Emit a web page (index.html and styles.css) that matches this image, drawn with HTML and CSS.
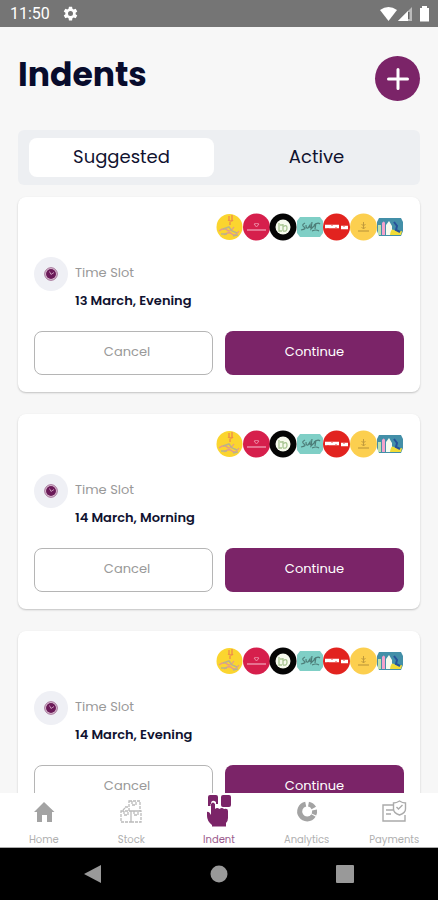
FILE: index.html
```html
<!DOCTYPE html>
<html lang="en">
<head>
<meta charset="utf-8">
<meta name="viewport" content="width=device-width, initial-scale=1">
<title>Indents</title>
<link rel="stylesheet" href="styles.css">
</head>
<body>
<svg class="defs" aria-hidden="true">
  <symbol id="brands" viewBox="0 0 188 28">
    <circle cx="13.500" cy="14" r="13" fill="#fbd52f"/>
    <path d="M13 3v5M16 2v6M12 7q3 2 5 0M14 9v3" stroke="#ee8c4c" stroke-width="1.300" fill="none"/>
    <path d="M3 18q5-4 8-1t7-3M8 22q5-4 8-1t7-3" stroke="#e59a8c" stroke-width="1.300" fill="none"/>
    <path d="M7 16l6-2 3 4 5 2M5 21h6M17 23l5-1" stroke="#b9b48c" stroke-width="1.500" fill="none"/>
    <circle cx="40.500" cy="14" r="13.500" fill="#d61f4c"/>
    <path d="M38 11l2.500 3 2.500-3q-2.500-1-5 0z" fill="none" stroke="#ec8ba4"/>
    <path d="M31 17h19" stroke="#ea86a0" stroke-width="1.600"/>
    <circle cx="67" cy="14" r="13.500" fill="#050505"/>
    <circle cx="67" cy="14" r="7.500" fill="#f7faee"/>
    <path d="M63 10v8h3M67 11v7M67 14q4-3 4 1t-4 3M64 12h3" fill="none" stroke="#a9c693" stroke-width="1.300"/>
    <path d="M84 4h20l3 4v12l-3 4H84l-3-4V8z" fill="#7fcfc6"/>
    <path d="M89 10q-4 2-1 4t-3 3M90 12q0 4 2 3l2-3v3M96 9l-1 7 4-4M100 10l-1 6M98 12q4-3 6-1M96 18q4-2 7 0" fill="none" stroke="#4d7d78" stroke-width="1.200"/>
    <circle cx="120.500" cy="14" r="13.500" fill="#e2231f"/>
    <path d="M109 13.500h14M125 14.500h7" stroke="#fff" stroke-width="3.400"/>
    <path d="M112 15v1M116 12v1M120 14v1M128 13v1" stroke="#e2231f" stroke-width=".8"/>
    <circle cx="147.500" cy="14" r="13.500" fill="#fccf4f"/>
    <path d="M147.500 9v7M145.500 11l2 2 2-2M145.500 14l2 2 2-2" fill="none" stroke="#c19b3d"/>
    <path d="M142 18h11" stroke="#c19b3d" stroke-width="1.200"/>
    <path d="M163 5h22l2 4v9l-2 5h-22l-2-5V9z" fill="#438fa8"/>
    <path d="M162 12h3v10h-3z" fill="#bfe0ae"/><path d="M166 10q2-3 3 0v12h-3z" fill="#f3a2cc"/>
    <path d="M170 12l3-4 3 5v9h-6z" fill="#f7fbee"/><path d="M174 22q1-7 4-5t8 1l-1 4z" fill="#f1dc37"/>
    <path d="M178 9l3 4-1 4 4 2" stroke="#26529a" stroke-width="2" fill="none"/>
  </symbol>
  <symbol id="clock" viewBox="0 0 14 14">
    <circle cx="7" cy="7" r="6.300" fill="#e4cfdd" stroke="#8b4a7b" stroke-width=".8"/>
    <circle cx="7" cy="7" r="5" fill="#6b1a58"/>
    <path d="M5.500 4.500l1.500 3 3-2" fill="none" stroke="#c391b5"/>
  </symbol>
</svg>

<header class="status">
  <span>11:50</span>
  <svg width="15" height="15" viewBox="0 0 24 24" aria-hidden="true"><path fill="#fff" fill-rule="evenodd" d="M9.500 1h5l.6 3.300 2 1.200 3.200-1.200 2.500 4.400-2.600 2.100v2.400l2.600 2.100-2.500 4.400-3.200-1.200-2 1.200-.6 3.300h-5l-.6-3.300-2-1.200-3.200 1.200-2.500-4.400 2.600-2.100v-2.400L1.200 8.700l2.500-4.400 3.200 1.200 2-1.200zM12 8a4 4 0 1 0 0 8 4 4 0 0 0 0-8z"/></svg>
  <svg class="signals" width="50" height="16" viewBox="0 0 50 16" aria-hidden="true">
    <path fill="#fff" d="M0 4q8.500-6 17 0L8.500 15z"/>
    <path fill="#bbb" d="M18 15L32 1v14z"/><path fill="#fff" d="M18 15L28 5v10z"/><path fill="#666" d="M28 6h1.500v7H28z"/>
    <path fill="#fff" d="M40 2h2V0h5v2h2v13.500h-9z"/>
  </svg>
</header>

<main class="screen">
  <div class="heading">
    <h1>Indents</h1>
    <button class="add" aria-label="Add indent"><svg width="24" height="24" viewBox="0 0 24 24"><path d="M12 2.500v19M2.500 12h19" stroke="#fff" stroke-width="3" stroke-linecap="round"/></svg></button>
  </div>
  <div class="tabs">
    <button class="tab selected">Suggested</button>
    <button class="tab">Active</button>
  </div>

  <section class="cards">
    <article class="card">
      <svg class="brands" aria-hidden="true"><use href="#brands"/></svg>
      <div class="slot">
        <span class="badge"><svg width="14" height="14" aria-hidden="true"><use href="#clock"/></svg></span>
        <div><p class="label">Time Slot</p><p class="date">13 March, Evening</p></div>
      </div>
      <div class="actions"><button class="cancel">Cancel</button><button class="continue">Continue</button></div>
    </article>
    <article class="card">
      <svg class="brands" aria-hidden="true"><use href="#brands"/></svg>
      <div class="slot">
        <span class="badge"><svg width="14" height="14" aria-hidden="true"><use href="#clock"/></svg></span>
        <div><p class="label">Time Slot</p><p class="date">14 March, Morning</p></div>
      </div>
      <div class="actions"><button class="cancel">Cancel</button><button class="continue">Continue</button></div>
    </article>
    <article class="card">
      <svg class="brands" aria-hidden="true"><use href="#brands"/></svg>
      <div class="slot">
        <span class="badge"><svg width="14" height="14" aria-hidden="true"><use href="#clock"/></svg></span>
        <div><p class="label">Time Slot</p><p class="date">14 March, Evening</p></div>
      </div>
      <div class="actions"><button class="cancel">Cancel</button><button class="continue">Continue</button></div>
    </article>
  </section>
</main>

<nav class="nav">
  <a href="#home"><svg viewBox="0 0 28 36" aria-hidden="true"><path fill="#a3a3a3" d="M14 9l10.500 10H22v10h-5v-7h-5v7H7V19H4z"/></svg>Home</a>
  <a href="#stock"><svg viewBox="0 0 28 36" aria-hidden="true"><g fill="none" stroke="#bbb" stroke-width="1.300" stroke-dasharray="3 1"><path d="M12 8h11v10H12zM4 18h10v11H4zM14 18h10v11H14zM15 8v4h4V8M7 18v4h4v-4M17 18v4h4v-4"/><path d="M8 14h4M6 17l3-3"/></g></svg>Stock</a>
  <a class="current" href="#indent"><svg viewBox="0 0 28 36" aria-hidden="true"><path fill="#7b2468" d="M3 4q0-2 2-2h6q2 0 2 2v7h-2V9q-4-3-5 1v3H3zM16 4q0-2 2-2h6q2 0 2 2v8q0 2-2 2h-6q-2 0-2-2z"/><path fill="#7b2468" stroke="#fff" stroke-width="1" paint-order="stroke" d="M6 11q2-3 4 0v5q2-2 4.500 0 2.500-2 4.500 0 4-1 4 2v7q0 3-2 5v3.500H7V32q-5-4-5-9v-4q2-1 4 3z"/></svg>Indent</a>
  <a href="#analytics"><svg viewBox="0 0 28 36" aria-hidden="true"><g fill="none" stroke="#a3a3a3" stroke-width="5"><path d="M12.700 11.100A7.500 7.500 0 1 0 20.500 22.500"/><path d="M15.500 11.100A7.500 7.500 0 0 1 20.800 15"/><path d="M21.500 17A7.500 7.500 0 0 1 20.900 21.500"/></g></svg>Analytics</a>
  <a href="#payments"><svg viewBox="0 0 28 36" aria-hidden="true"><g fill="none" stroke="#aaa" stroke-width="1.400"><path d="M14 12H3v16h22v-6M6 17h7M6 21h5"/><path d="M19.500 8q3 2 6 2v6q0 4-6 6-6-2-6-6v-6q3 0 6-2zM16.500 14l2 2 4-4"/></g></svg>Payments</a>
</nav>

<footer class="system">
  <button aria-label="Back"><svg width="18" height="20" viewBox="0 0 18 20"><path fill="#999" d="M17 1v18L0 10z"/></svg></button>
  <button aria-label="Home screen"><svg width="18" height="18" viewBox="0 0 18 18"><circle cx="9" cy="9" r="8.500" fill="#999"/></svg></button>
  <button aria-label="Recent apps"><svg width="18" height="18" viewBox="0 0 18 18"><rect width="18" height="18" rx="1" fill="#999"/></svg></button>
</footer>
</body>
</html>
```
FILE: styles.css
```css
* { box-sizing: border-box; }

body {
  display: flex;
  flex-direction: column;
  height: 100vh;
  margin: 0;
  background: #f7f7f7;
  color: #10122f;
  font-family: Poppins, Inter, sans-serif;
}

button {
  padding: 0;
  border: 0;
  background: none;
  color: inherit;
  font: inherit;
}

h1, p { margin: 0; }

.defs {
  position: absolute;
  width: 0;
  height: 0;
}

.status {
  display: flex;
  flex: none;
  align-items: center;
  gap: 13px;
  height: 27px;
  padding: 0 8px 0 10px;
  background: #757575;
  color: #fff;
  font: 16px/27px Roboto, sans-serif;
}

.signals { margin-left: auto; }

.screen {
  flex: 1;
  min-height: 0;
  overflow: hidden;
  padding: 29px 18px 0;
}

.heading {
  display: flex;
  align-items: flex-start;
  justify-content: space-between;
}

h1 {
  color: #080c2c;
  font-size: 33px;
  font-weight: 700;
  line-height: 38px;
}

.add {
  display: grid;
  place-items: center;
  width: 45px;
  height: 45px;
  border-radius: 50%;
  background: #7b2468;
}

.tabs {
  display: grid;
  grid-template-columns: 1fr 1fr;
  gap: 10px;
  margin: 29px 0 12px;
  padding: 8px 11px;
  border-radius: 6px;
  background: #edeff2;
}

.tab {
  height: 39px;
  padding-bottom: 2px;
  border-radius: 8px;
  font-size: 18px;
  line-height: 24px;
}

.selected { background: #fff; }

.cards {
  display: grid;
  gap: 22px;
}

.card {
  padding: 16px 16px 17px;
  border-radius: 8px;
  background: #fff;
  box-shadow: 0 1px 2px #00000038;
}

.brands {
  display: block;
  width: 188px;
  height: 28px;
  margin: 0 0 16px auto;
}

.slot {
  display: flex;
  gap: 7px;
  margin-bottom: 16px;
}

.badge {
  display: grid;
  place-items: center;
  width: 34px;
  height: 34px;
  border-radius: 50%;
  background: #eff0f5;
}

.label, .date {
  font-size: 13px;
  line-height: 28px;
}

.label {
  padding-top: 2px;
  color: #999;
}

.date { font-weight: 600; }

.actions {
  display: grid;
  grid-template-columns: 1fr 1fr;
  gap: 12px;
}

.cancel, .continue {
  height: 44px;
  padding-bottom: 2px;
  border-radius: 8px;
  font-size: 13px;
}

.cancel {
  padding-left: 7px;
  border: 1px solid #b5b5b5;
  color: #999;
}

.continue {
  background: #7b2468;
  color: #fff;
}

.nav {
  display: grid;
  flex: none;
  grid-template-columns: repeat(5, 1fr);
  border-bottom: 1px solid #aaa;
  background: #fff;
}

.nav a {
  display: flex;
  flex-direction: column;
  align-items: center;
  gap: 4px;
  color: #b0b0b0;
  font-size: 10px;
  line-height: 14px;
  text-decoration: none;
}

.nav svg {
  width: 28px;
  height: 36px;
}

.nav .current { color: #9b5b8d; }

.system {
  display: flex;
  flex: none;
  align-items: center;
  justify-content: center;
  gap: 108px;
  height: 52px;
  background: #000;
}

.system svg { display: block; }
```
